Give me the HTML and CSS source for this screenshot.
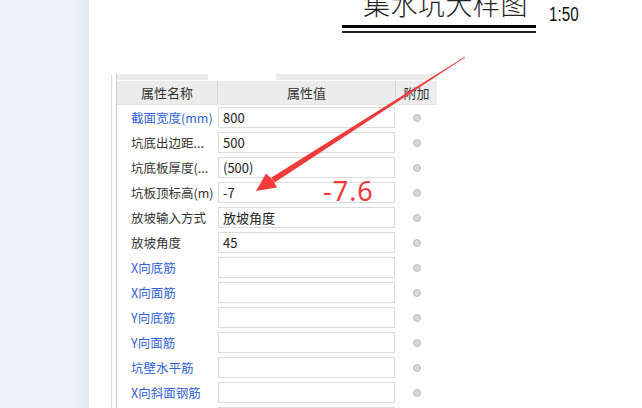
FILE: index.html
```html
<!DOCTYPE html>
<html lang="zh">
<head>
  <meta charset="UTF-8" />
  <title>集水坑属性</title>
  <link rel="stylesheet" href="styles.css">
</head>
<body>
  <aside class="sidebar"></aside>
  <main class="canvas">
    <div class="drawing-head">
      <div class="title-block">
        <div class="title">集水坑大样图</div>
        <div class="rule-thick"></div>
        <div class="rule-thin"></div>
      </div>
      <div class="scale">1:50</div>
    </div>

    <div class="panel">
      <div class="panel-inner">
        <div class="tabbar">
          <span class="tab-gray tab-a"></span>
          <span class="tab-white"></span>
          <span class="tab-gray tab-b"></span>
        </div>
        <div class="prop-row prop-head">
          <div class="cell">属性名称</div>
          <div class="cell">属性值</div>
          <div class="cell">附加</div>
        </div>

        <div class="prop-row"><div class="name blue">截面宽度(mm)</div><div class="val"><div class="box">800</div></div><div class="extra"><span class="dot"></span></div></div>
        <div class="prop-row"><div class="name">坑底出边距...</div><div class="val"><div class="box">500</div></div><div class="extra"><span class="dot"></span></div></div>
        <div class="prop-row"><div class="name">坑底板厚度(...</div><div class="val"><div class="box">(500)</div></div><div class="extra"><span class="dot"></span></div></div>
        <div class="prop-row"><div class="name">坑板顶标高(m)</div><div class="val"><div class="box">-7</div></div><div class="extra"><span class="dot"></span></div></div>
        <div class="prop-row"><div class="name">放坡输入方式</div><div class="val"><div class="box">放坡角度</div></div><div class="extra"><span class="dot"></span></div></div>
        <div class="prop-row"><div class="name">放坡角度</div><div class="val"><div class="box">45</div></div><div class="extra"><span class="dot"></span></div></div>
        <div class="prop-row"><div class="name blue">X向底筋</div><div class="val"><div class="box"></div></div><div class="extra"><span class="dot"></span></div></div>
        <div class="prop-row"><div class="name blue">X向面筋</div><div class="val"><div class="box"></div></div><div class="extra"><span class="dot"></span></div></div>
        <div class="prop-row"><div class="name blue">Y向底筋</div><div class="val"><div class="box"></div></div><div class="extra"><span class="dot"></span></div></div>
        <div class="prop-row"><div class="name blue">Y向面筋</div><div class="val"><div class="box"></div></div><div class="extra"><span class="dot"></span></div></div>
        <div class="prop-row"><div class="name blue">坑壁水平筋</div><div class="val"><div class="box"></div></div><div class="extra"><span class="dot"></span></div></div>
        <div class="prop-row"><div class="name blue">X向斜面钢筋</div><div class="val"><div class="box"></div></div><div class="extra"><span class="dot"></span></div></div>
        <div class="prop-row"><div class="name blue"></div><div class="val"><div class="box"></div></div><div class="extra"><span class="dot"></span></div></div>
      </div>
    </div>
  </main>

  <!-- screenshot markup on top -->
  <div class="note-layer">
    <svg class="arrow" width="642" height="408" viewBox="0 0 642 408">
      <polygon points="465.3,57.2 274.6,182.4 271.4,177.6 464.7,56.8" fill="#f23a3a" />
      <polygon points="256,191 266,173.5 272.5,179.5 277,187.5" fill="#f23a3a" />
    </svg>
    <div class="note-text">-7.6</div>
  </div>
</body>
</html>
```

FILE: styles.css
```css
body {
  margin: 0;
  height: 408px;
  overflow: hidden;
  display: flex;
  position: relative;
  background: #fff;
  font-family: "Noto Sans CJK SC", "Noto Sans", sans-serif;
  color: #333;
}
.sidebar {
  width: 89px;
  flex: none;
  background: linear-gradient(to right, #ecf3fb 0, #ebf2fa 86%, #e2e8f0 100%);
}
.canvas {
  flex: 1;
}

/* drawing title */
.drawing-head {
  display: flex;
  align-items: flex-start;
  height: 42px;
  margin-top: -10px;
  margin-left: 253px;
}
.title-block {
  width: 194px;
}
.title {
  font-size: 27px;
  font-weight: 300;
  line-height: 28px;
  height: 28px;
  padding-left: 21px;
  letter-spacing: 0.5px;
  color: #222;
  white-space: nowrap;
}
.rule-thick {
  height: 3px;
  margin-top: 7px;
  background: #000;
}
.rule-thin {
  height: 1.5px;
  margin-top: 3px;
  background: #222;
}
.scale {
  margin-left: 13px;
  margin-top: 14px;
  font-family: "Liberation Sans", Arial, sans-serif;
  font-size: 20px;
  line-height: 20px;
  color: #111;
  transform: scaleX(0.76);
  transform-origin: left top;
}

/* property panel */
.panel {
  margin-top: 42px;
  margin-left: 22px;
  border-left: 1px solid #dcdcdc;
  padding-left: 4px;
}
.panel-inner {
  border-left: 1px solid #cdcdcd;
  width: 320px;
}
.tabbar {
  display: flex;
  height: 6px;
}
.tab-gray { background: #ececec; }
.tab-a { width: 91px; }
.tab-white { width: 68px; background: #fff; }
.tab-b { flex: 1; }

.prop-row {
  display: grid;
  grid-template-columns: 101px 178px 41px;
  height: 25px;
  font-size: 13px;
  line-height: 25px;
}
.prop-head {
  margin-top: 1px;
  height: 24px;
  line-height: 23px;
  background: #ececec;
  border-bottom: 1px solid #e2e2e2;
  box-sizing: border-box;
}
.prop-head .cell {
  text-align: center;
  border-right: 1px solid #d6d6d6;
  color: #333;
}
.prop-head .cell:last-child {
  border-right: none;
}
.name {
  padding-left: 14px;
  font-size: 12.5px;
  white-space: nowrap;
  overflow: hidden;
  color: #333;
}
.name.blue {
  color: #2f5fdb;
}
.box {
  width: 177px;
  height: 21px;
  margin-top: 2px;
  box-sizing: border-box;
  border: 1px solid #dcdcdc;
  padding-left: 4px;
  line-height: 19px;
  color: #222;
}
.extra {
  display: flex;
  justify-content: center;
  align-items: center;
}
.dot {
  width: 8px;
  height: 8px;
  border-radius: 50%;
  background: #d8d8d8;
  border: 1px solid #bcbcbc;
  box-sizing: border-box;
}

/* annotation overlay */
.note-layer {
  position: absolute;
  left: 0;
  top: 0;
  width: 642px;
  height: 408px;
  pointer-events: none;
}
.arrow {
  display: block;
}
.note-text {
  position: absolute;
  left: 323px;
  top: 177px;
  font-family: "Noto Sans", sans-serif;
  font-size: 27px;
  line-height: 27px;
  letter-spacing: 1px;
  color: #f23a3a;
}
```
